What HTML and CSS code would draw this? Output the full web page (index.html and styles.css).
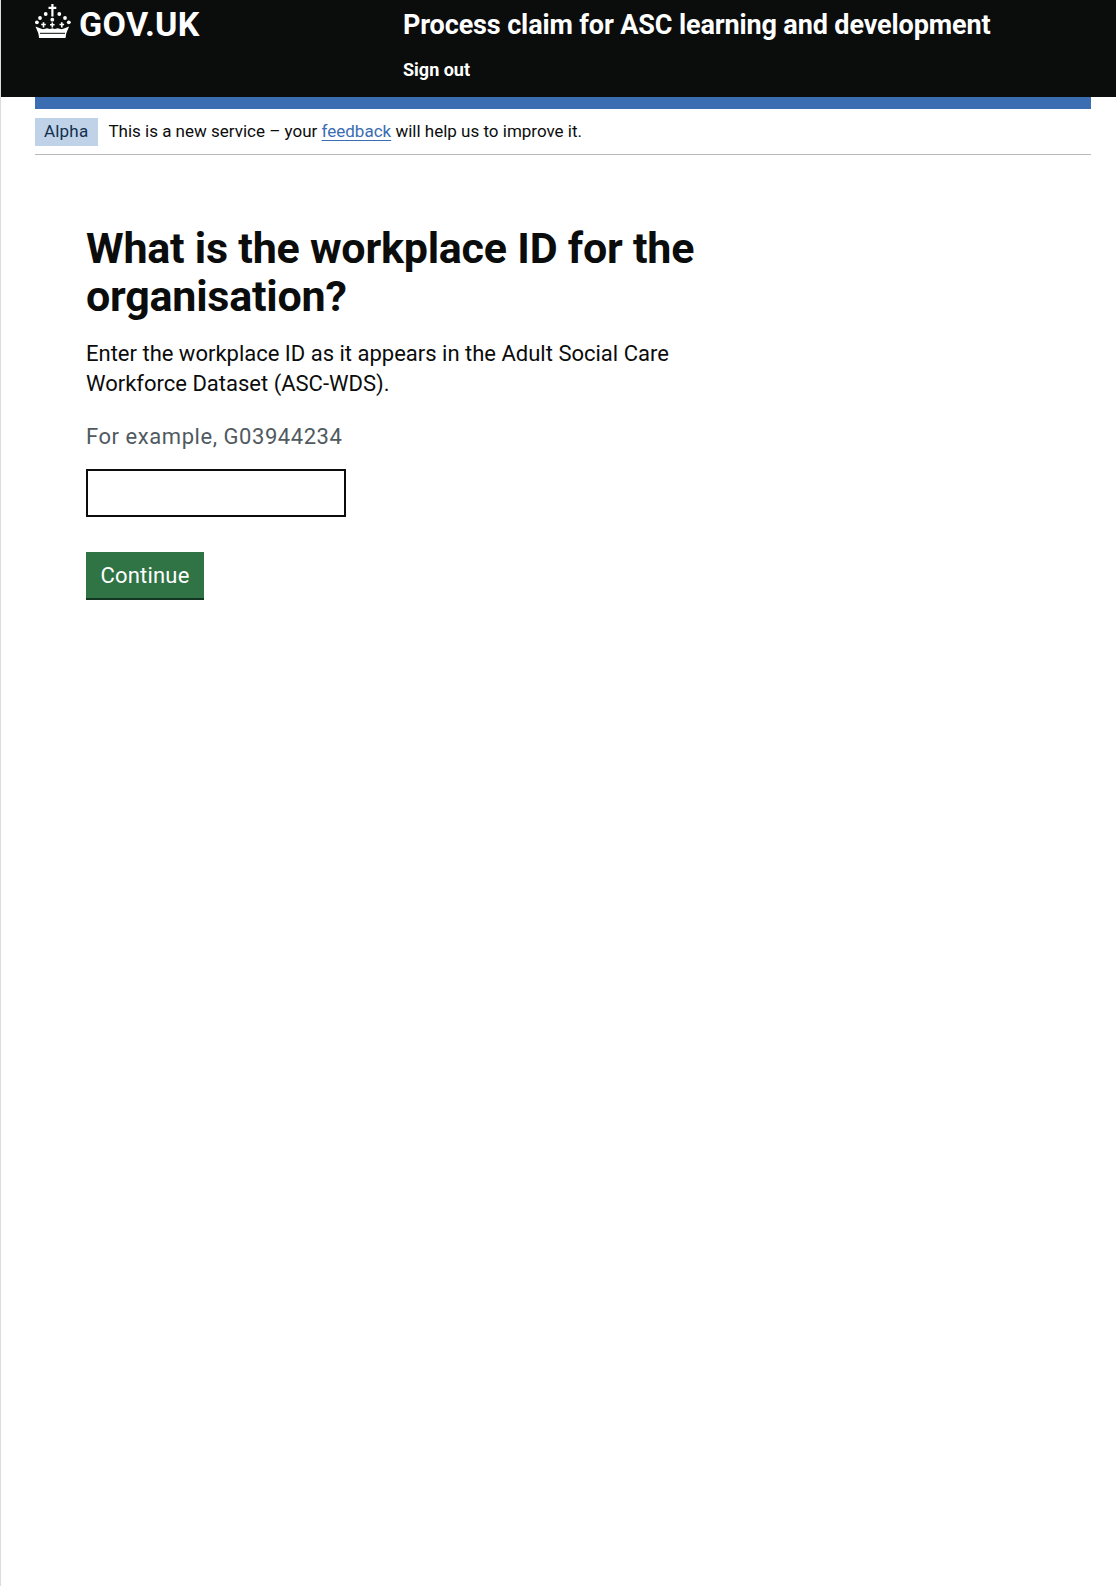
FILE: index.html
```html
<!DOCTYPE html>
<html lang="en">
<head>
<meta charset="utf-8">
<title>What is the workplace ID for the organisation?</title>
<link rel="stylesheet" href="styles.css">
</head>
<body>
<header class="header">
  <a class="logo" href="#">
    <svg class="crown" viewBox="0 0 36 34" width="36" height="34" aria-hidden="true">
      <g fill="#fff">
        <path d="M16.300 0h2.200v2.800h2.800v2.200h-2.800v7.500h-2.200V5h-2.800V2.800h2.800z"/>
        <circle cx="10.700" cy="10" r="1.900"/><circle cx="24.300" cy="10" r="1.900"/>
        <circle cx="5" cy="14" r="1.900"/><circle cx="30" cy="14" r="1.900"/>
        <circle cx="1.900" cy="18.300" r="1.900"/><circle cx="33.800" cy="18.300" r="1.900"/>
        <circle cx="17.300" cy="15.700" r="1.900"/>
        <path d="M7.700 18.300h1.600v1.500h1.500v1.500H9.300v2.200h-1.600v-2.200H6.200v-1.500h1.500z"/>
        <path d="M16.500 18.600h1.600v1.300h1.500v1.500h-1.500v2.100h-1.600v-2.100H15v-1.500h1.500z"/>
        <path d="M26 18.300h1.600v1.500h1.500v1.500h-1.500v2.200H26v-2.200h-1.500v-1.500H26z"/>
        <path d="M0.500 22.500l4.500 1.800 3 1 4-1 3 .7 2.300-.7 2.300.7 3-.7 4 1 3-1 4.500-1.800-2.800 6.800-.8 4.700H4.100l-.8-4.700z"/>
      </g>
      <rect x="5" y="28.800" width="25" height="1" fill="#0b0c0c"/>
    </svg>
    <span class="logo-text">GOV.UK</span>
  </a>
  <div class="header-content">
    <a class="service-name" href="#">Process claim for ASC learning and development</a>
    <a class="nav-link" href="#">Sign out</a>
  </div>
</header>
<div class="width-container">
  <div class="blue-bar"></div>
  <div class="phase-banner">
    <strong class="tag">Alpha</strong>
    <span class="phase-text">This is a new service – your <a class="link" href="#">feedback</a> will help us to improve it.</span>
  </div>
  <main class="main">
    <h1 class="heading">What is the workplace ID for the organisation?</h1>
    <p class="body">Enter the workplace ID as it appears in the Adult Social Care Workforce Dataset (ASC-WDS).</p>
    <div class="hint">For example, G03944234</div>
    <input class="input" type="text" aria-label="Workplace ID">
    <button class="button" type="button">Continue</button>
  </main>
</div>
</body>
</html>
```
FILE: styles.css
```css
* { box-sizing: border-box; }
html, body { margin: 0; padding: 0; }
body {
  min-height: 1586px;
  background: #fff;
  border-left: 1px solid #dcdcdc;
  color: #0b0c0c;
  font-family: Roboto, "Liberation Sans", sans-serif;
}
.header {
  display: flex;
  height: 97px;
  background: #0b0c0c;
  padding-left: 34px;
  color: #fff;
}
.logo {
  display: flex;
  align-items: flex-start;
  gap: 8px;
  width: 368px;
  color: #fff;
  text-decoration: none;
}
.crown { margin-top: 4px; flex: none; }
.logo-text {
  font-size: 34px;
  line-height: 48px;
  font-weight: 700;
  letter-spacing: 0.35px;
}
.header-content { display: flex; flex-direction: column; }
.service-name {
  color: #fff;
  text-decoration: none;
  font-size: 27px;
  line-height: 50px;
  font-weight: 700;
  letter-spacing: -0.13px;
}
.nav-link {
  margin-top: 8px;
  color: #fff;
  text-decoration: none;
  font-size: 18px;
  line-height: 24px;
  font-weight: 700;
}
.width-container { margin: 0 25px 0 34px; }
.blue-bar { height: 12px; background: #3a6db2; }
.phase-banner {
  display: flex;
  align-items: center;
  gap: 10px;
  padding: 9px 0 8px;
  border-bottom: 1px solid #b7b9ba;
}
.tag {
  padding: 0 10px 2px 9px;
  background: #bfd2e7;
  color: #13304f;
  font-size: 17px;
  line-height: 26px;
  font-weight: 400;
  letter-spacing: 0.2px;
}
.phase-text { padding-bottom: 2px; font-size: 17px; line-height: 24px; }
.link { color: #3a6db2; text-underline-offset: 3px; }
.main {
  display: flex;
  flex-direction: column;
  align-items: flex-start;
  padding: 69px 0 0 51px;
}
.heading {
  width: 660px;
  margin: 0 0 19px;
  font-size: 43px;
  line-height: 48px;
  font-weight: 700;
  letter-spacing: -0.22px;
}
.body {
  width: 640px;
  margin: 0 0 23px;
  font-size: 22px;
  line-height: 30px;
}
.hint {
  margin-bottom: 17px;
  color: #505a5f;
  font-size: 22px;
  line-height: 30px;
  letter-spacing: 0.55px;
}
.input {
  display: block;
  width: 260px;
  height: 48px;
  margin: 0 0 35px;
  border: 2px solid #0b0c0c;
  border-radius: 0;
  background: #fff;
}
.button {
  height: 48px;
  width: 118px;
  padding: 0;
  border: 0;
  border-bottom: 2px solid #12361f;
  border-radius: 0;
  background: #307345;
  color: #fff;
  font-family: inherit;
  font-size: 22px;
  letter-spacing: 0.2px;
}
```
